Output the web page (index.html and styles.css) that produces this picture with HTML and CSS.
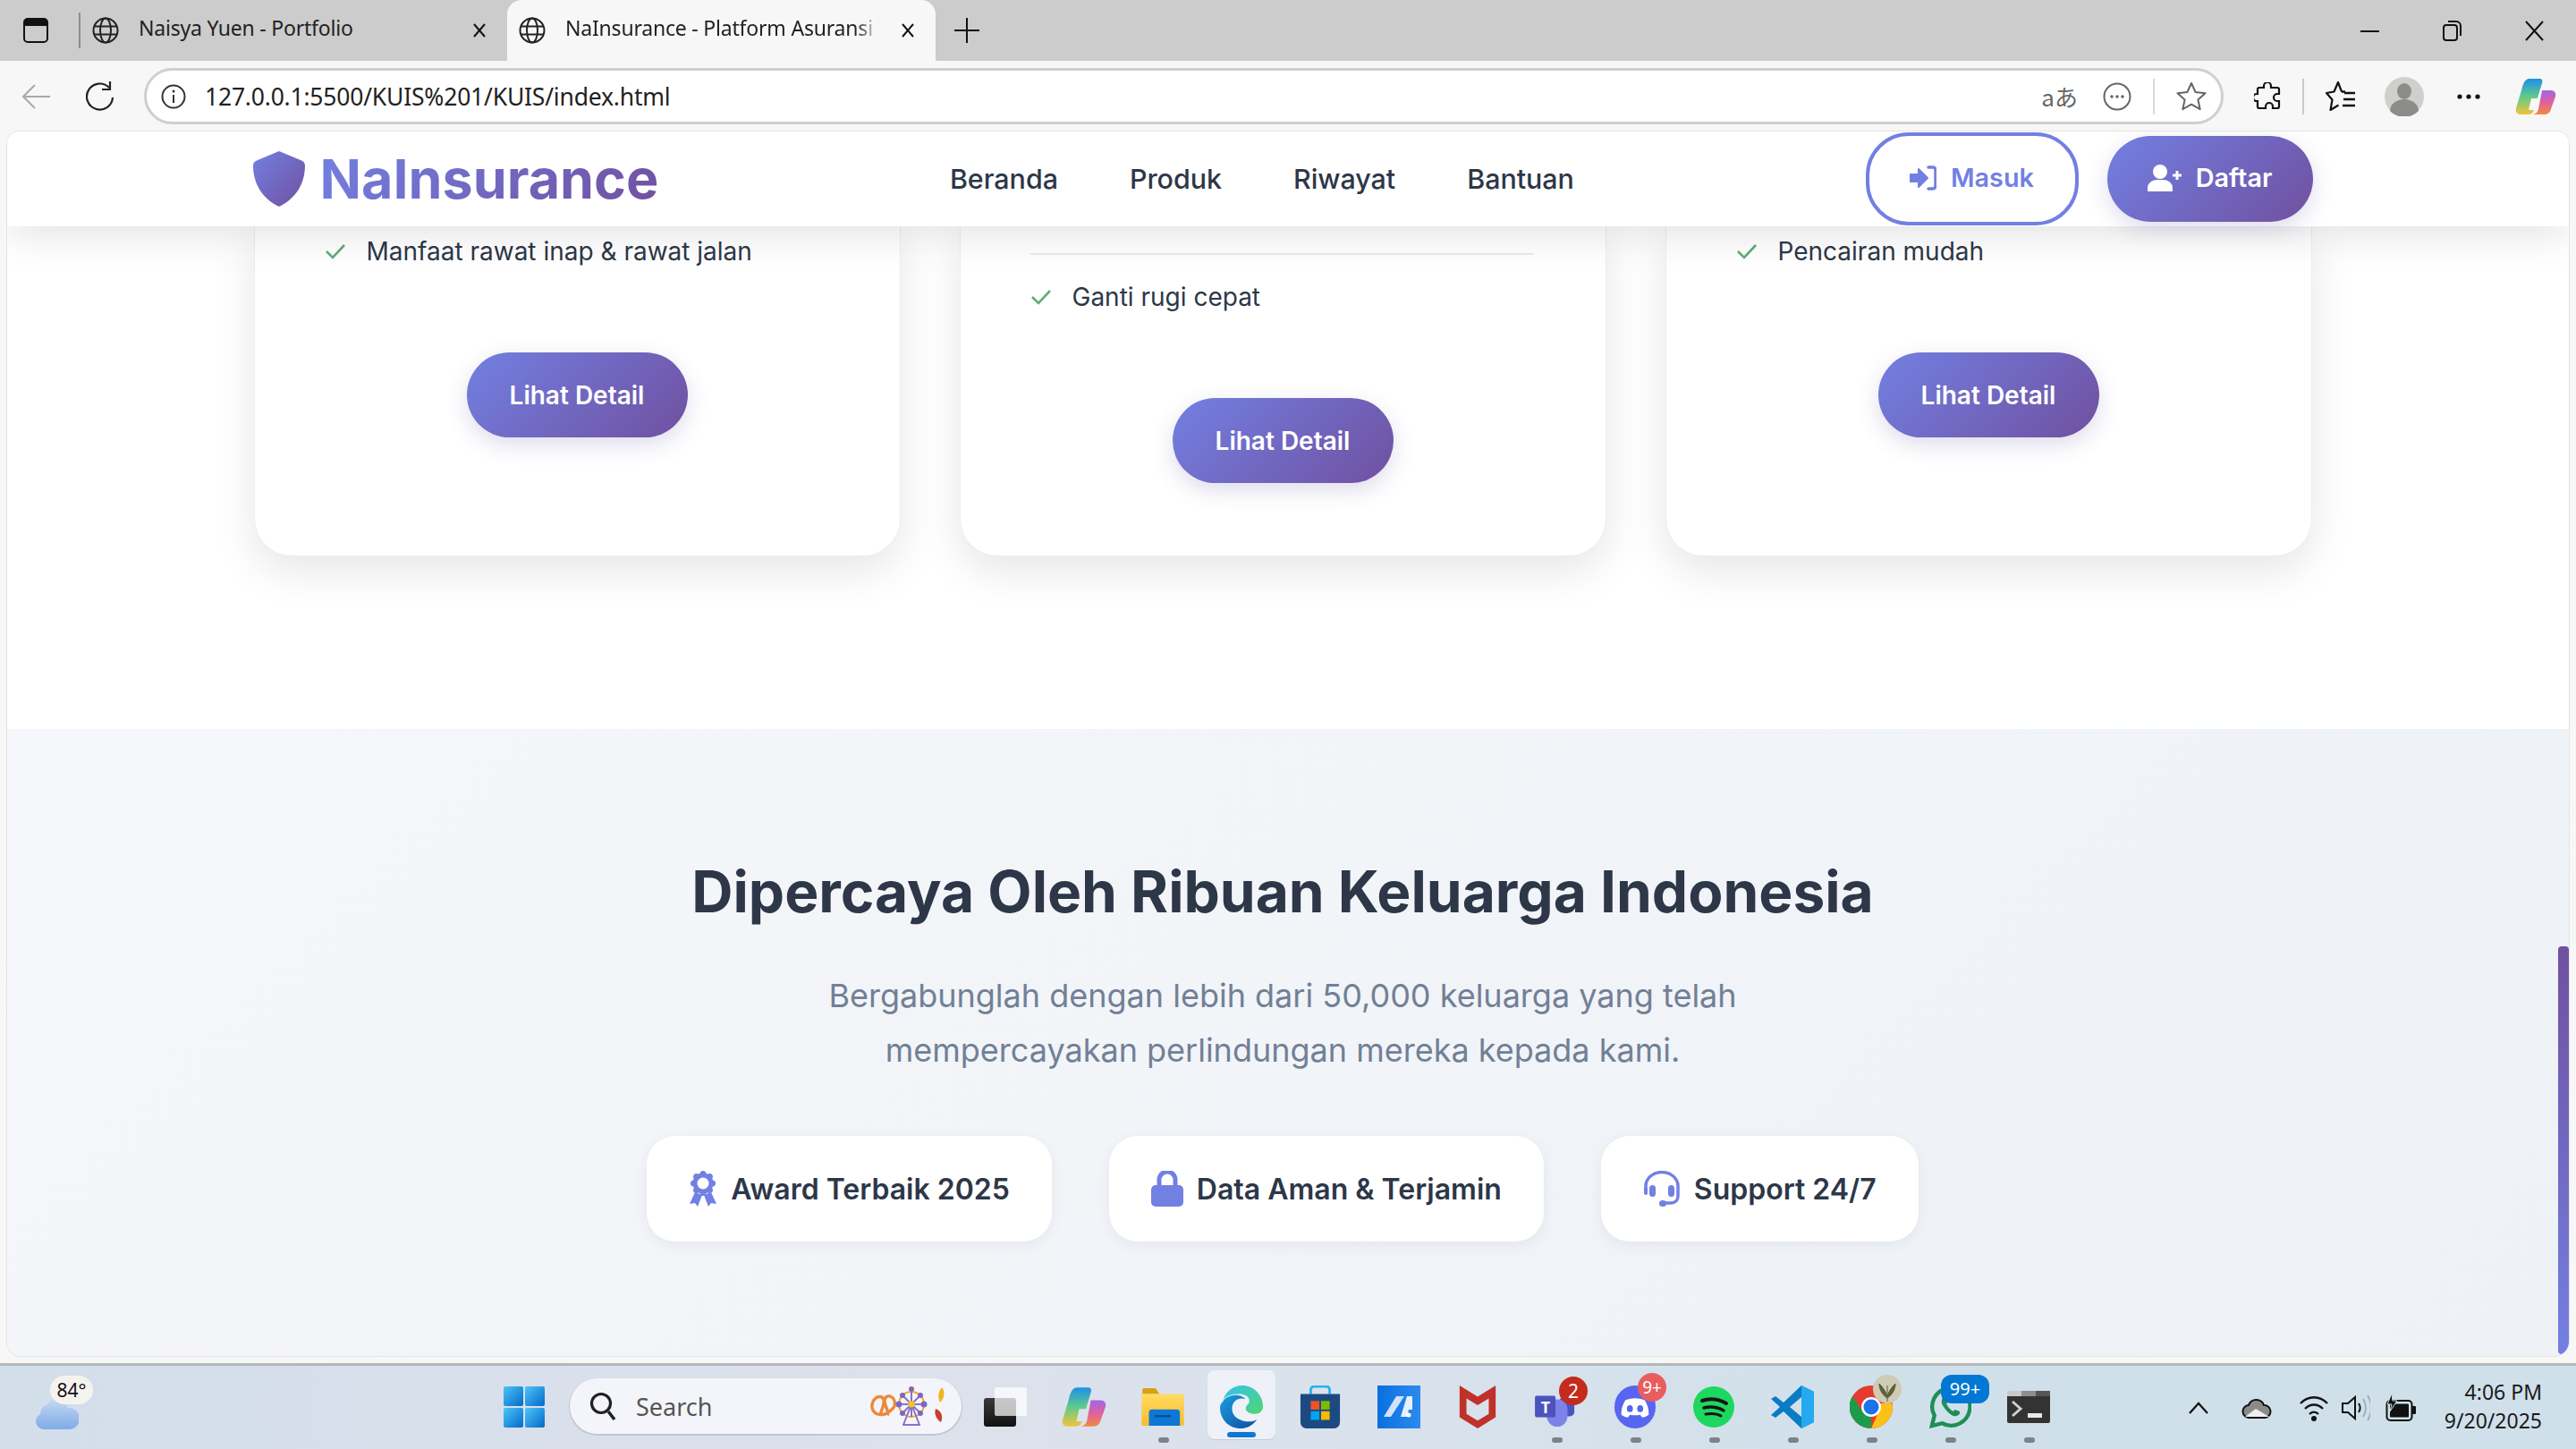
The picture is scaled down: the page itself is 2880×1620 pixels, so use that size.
FILE: index.html
```html
<!DOCTYPE html>
<html lang="id">
<head>
<meta charset="utf-8">
<title>NaInsurance - Platform Asuransi Terpercaya</title>
<link rel="stylesheet" href="styles.css">
</head>
<body>
<svg class="defs" aria-hidden="true">
  <defs>
    <linearGradient id="brand" x1="0" y1="0" x2="1" y2="1"><stop offset="0" stop-color="#7280e2"/><stop offset="1" stop-color="#7050a0"/></linearGradient>
    <linearGradient id="cp1" x1="0" y1="0" x2="0" y2="1"><stop offset="0" stop-color="#1f8fe8"/><stop offset=".5" stop-color="#5ecb8b"/><stop offset="1" stop-color="#f2c33a"/></linearGradient>
    <linearGradient id="cp2" x1="0" y1="0" x2="0" y2="1"><stop offset="0" stop-color="#a066e6"/><stop offset=".5" stop-color="#e0609f"/><stop offset="1" stop-color="#f28a3c"/></linearGradient>
    <linearGradient id="edge1" x1="0" y1="0" x2="1" y2="1"><stop offset="0" stop-color="#35c1f1"/><stop offset="1" stop-color="#4fd66f"/></linearGradient>
    <linearGradient id="edge2" x1="0" y1="0" x2="1" y2="1"><stop offset="0" stop-color="#1b9de2"/><stop offset="1" stop-color="#0c4f9e"/></linearGradient>
    <linearGradient id="win" x1="0" y1="0" x2="1" y2="1"><stop offset="0" stop-color="#4cc6f7"/><stop offset="1" stop-color="#0568c9"/></linearGradient>
    <linearGradient id="folder" x1="0" y1="0" x2="0" y2="1"><stop offset="0" stop-color="#ffdb62"/><stop offset="1" stop-color="#f9bd2c"/></linearGradient>
    <linearGradient id="cloud" x1="0" y1="0" x2="0" y2="1"><stop offset="0" stop-color="#c3d8f4"/><stop offset="1" stop-color="#7fabe6"/></linearGradient>
    <linearGradient id="dark" x1="0" y1="0" x2="0" y2="1"><stop offset="0" stop-color="#3a3a3a"/><stop offset="1" stop-color="#111"/></linearGradient>
    <linearGradient id="mblue" x1="0" y1="0" x2="1" y2="0"><stop offset="0" stop-color="#0a6fe0"/><stop offset="1" stop-color="#2c8bee"/></linearGradient>
  </defs>
</svg>

<header class="tabstrip">
  <svg class="tab-panel" width="28" height="28" viewBox="0 0 28 28"><rect x="1" y="1" width="26" height="26" rx="4" fill="none" stroke="#111" stroke-width="2"/><path d="M1 5a4 4 0 0 1 4-4h18a4 4 0 0 1 4 4v4H1z" fill="#111"/></svg>
  <span class="tab-divider"></span>
  <div class="tab tab-first">
    <svg class="globe" width="30" height="30" viewBox="0 0 30 30"><g fill="none" stroke="#222" stroke-width="2"><circle cx="15" cy="15" r="13.500"/><ellipse cx="15" cy="15" rx="6" ry="13.500"/><path d="M2 10.500h26M2 19.500h26"/></g></svg>
    <span class="tab-title">Naisya Yuen - Portfolio</span>
    <svg class="tab-close" width="18" height="18" viewBox="0 0 18 18"><path d="M3 2l12 14M15 2L3 16" stroke="#111" stroke-width="2"/></svg>
  </div>
  <div class="tab tab-active">
    <svg class="globe" width="30" height="30" viewBox="0 0 30 30"><g fill="none" stroke="#222" stroke-width="2"><circle cx="15" cy="15" r="13.500"/><ellipse cx="15" cy="15" rx="6" ry="13.500"/><path d="M2 10.500h26M2 19.500h26"/></g></svg>
    <span class="tab-title tab-title-fade">NaInsurance - Platform Asuransi Terpercaya</span>
    <svg class="tab-close" width="18" height="18" viewBox="0 0 18 18"><path d="M3 2l12 14M15 2L3 16" stroke="#111" stroke-width="2"/></svg>
  </div>
  <svg class="tab-new" width="30" height="30" viewBox="0 0 30 30"><path d="M15 1v28M1 15h28" stroke="#111" stroke-width="2"/></svg>
  <div class="winctl">
    <svg width="92" height="24" viewBox="0 0 22 24" class="wc"><path d="M0 13h21" stroke="#111" stroke-width="2"/></svg>
    <svg width="92" height="24" viewBox="0 0 22 24" class="wc"><rect x="1" y="6" width="15" height="17" rx="3" fill="none" stroke="#111" stroke-width="2"/><path d="M6 2h9a5 5 0 0 1 5 5v11" fill="none" stroke="#111" stroke-width="2"/></svg>
    <svg width="92" height="24" viewBox="0 0 22 24" class="wc"><path d="M1 2l19 21M20 2L1 23" stroke="#111" stroke-width="2"/></svg>
  </div>
</header>

<div class="toolbar">
  <svg class="tb-back" width="32" height="28" viewBox="0 0 32 28"><path d="M15 1L2 14l13 13M2 14h30" fill="none" stroke="#a8a8a8" stroke-width="2"/></svg>
  <svg class="tb-reload" width="32" height="34" viewBox="0 0 32 34"><path d="M26 7A14.500 14.500 0 1 0 30 18" fill="none" stroke="#222" stroke-width="2.200"/><path d="M27 0v9h-9" fill="none" stroke="#222" stroke-width="2.200"/></svg>
  <div class="omnibox">
    <svg width="28" height="28" viewBox="0 0 28 28"><circle cx="14" cy="14" r="12.500" fill="none" stroke="#333" stroke-width="2"/><path d="M14 12v9" stroke="#333" stroke-width="2"/><circle cx="14" cy="8" r="1.500" fill="#333"/></svg>
    <span class="url">127.0.0.1:5500/KUIS%201/KUIS/index.html</span>
    <div class="omni-right">
      <span class="translate">aあ</span>
      <svg width="32" height="32" viewBox="0 0 32 32"><circle cx="16" cy="16" r="14.500" fill="none" stroke="#666" stroke-width="2"/><g fill="#666"><circle cx="10" cy="16" r="1.800"/><circle cx="16" cy="16" r="1.800"/><circle cx="22" cy="16" r="1.800"/></g></svg>
      <span class="omni-sep"></span>
      <svg width="34" height="34" viewBox="0 0 34 34"><path d="M17 2l4.600 10 10.900 1.200-8.100 7.300 2.300 10.700L17 25.700 7.300 31.200l2.300-10.700-8.100-7.300L12.400 12z" fill="none" stroke="#666" stroke-width="2" stroke-linejoin="round"/></svg>
    </div>
  </div>
  <div class="tb-right">
    <svg width="30" height="32" viewBox="0 0 30 32"><path d="M11 4a4 4 0 0 1 8 0v2h7a2 2 0 0 1 2 2v5h-2a4 4 0 0 0 0 8h2v6a2 2 0 0 1-2 2h-5v-2a4 4 0 0 0-8 0v2H6a2 2 0 0 1-2-2v-6H3a3 3 0 0 1 0-8h1V8a2 2 0 0 1 2-2h5z" fill="none" stroke="#111" stroke-width="2.200"/></svg>
    <span class="tb-sep"></span>
    <svg width="34" height="34" viewBox="0 0 34 34"><path d="M18 11.500L14 1l-4.500 10.500L1 13l6.500 7.500L5.500 32l9-5.500" fill="none" stroke="#111" stroke-width="2.200" stroke-linejoin="round"/><path d="M18 11.500h4M21 13h12M20 20h13M19 27h14" fill="none" stroke="#111" stroke-width="2.400"/></svg>
    <svg class="avatar" width="44" height="44" viewBox="0 0 44 44"><circle cx="22" cy="22" r="22" fill="#d0cfcb"/><ellipse cx="22" cy="16" rx="8" ry="9" fill="#8c8c8a"/><path d="M6 38a16 13 0 0 1 32 0 22 22 0 0 1-32 0z" fill="#8c8c8a"/></svg>
    <svg class="tb-more" width="28" height="6" viewBox="0 0 28 6"><g fill="#111"><circle cx="4" cy="3" r="2.600"/><circle cx="14" cy="3" r="2.600"/><circle cx="24" cy="3" r="2.600"/></g></svg>
    <svg class="tb-copilot" width="46" height="42" viewBox="0 0 46 42"><path d="M16 1h11c3 0 4 2 3 5l-9 30c-1 3-3 5-7 5H6c-4 0-6-3-5-7l6-20C9 6 11 1 16 1z" fill="url(#cp1)"/><path d="M30 14h10c4 0 6 3 5 7l-5 14c-1 4-4 6-8 6H20c4-1 5-3 6-6z" fill="url(#cp2)"/><path d="M18 23h9l-4 13h-8z" fill="#f7f7f7"/></svg>
  </div>
</div>

<main class="page">
  <nav class="navbar">
    <div class="nav-inner">
      <a class="brand">
        <svg width="58" height="62" viewBox="0 0 58 62"><path d="M29 0l24 10c3 1 5 3 5 6 0 20-10 37-29 46C10 53 0 36 0 16c0-3 2-5 5-6z" fill="url(#brand)"/></svg>
        <span class="brand-text">NaInsurance</span>
      </a>
      <div class="nav-links">
        <a>Beranda</a><a>Produk</a><a>Riwayat</a><a>Bantuan</a>
      </div>
      <div class="nav-actions">
        <a class="btn-outline">
          <svg width="30" height="28" viewBox="0 0 30 28"><path d="M1 10h9V4l10 10-10 10v-6H1z" fill="#7280e2" stroke="#7280e2" stroke-width="2" stroke-linejoin="round"/><path d="M21 2h5a3 3 0 0 1 3 3v18a3 3 0 0 1-3 3h-5" fill="none" stroke="#7280e2" stroke-width="3.500" stroke-linecap="round"/></svg>
          Masuk
        </a>
        <a class="btn-solid">
          <svg width="38" height="30" viewBox="0 0 38 30"><circle cx="14" cy="8" r="8" fill="#fff"/><path d="M0 30v-4a10 9 0 0 1 10-9h8a10 9 0 0 1 10 9v4z" fill="#fff"/><path d="M33 7v10M28 12h10" stroke="#fff" stroke-width="3"/></svg>
          Daftar
        </a>
      </div>
    </div>
  </nav>

  <section class="products">
    <article class="card">
      <div class="check-item"><svg width="24" height="18" viewBox="0 0 24 18"><path d="M2 9l7 7L22 2" fill="none" stroke="#5fae75" stroke-width="2.600"/></svg><span>Manfaat rawat inap &amp; rawat jalan</span></div>
      <a class="btn-detail">Lihat Detail</a>
    </article>
    <article class="card">
      <div class="card-rule"></div>
      <div class="check-item"><svg width="24" height="18" viewBox="0 0 24 18"><path d="M2 9l7 7L22 2" fill="none" stroke="#5fae75" stroke-width="2.600"/></svg><span>Ganti rugi cepat</span></div>
      <a class="btn-detail">Lihat Detail</a>
    </article>
    <article class="card">
      <div class="check-item"><svg width="24" height="18" viewBox="0 0 24 18"><path d="M2 9l7 7L22 2" fill="none" stroke="#5fae75" stroke-width="2.600"/></svg><span>Pencairan mudah</span></div>
      <a class="btn-detail">Lihat Detail</a>
    </article>
  </section>

  <section class="trust">
    <h2>Dipercaya Oleh Ribuan Keluarga Indonesia</h2>
    <p>Bergabunglah dengan lebih dari 50,000 keluarga yang telah<br>mempercayakan perlindungan mereka kepada kami.</p>
    <div class="badges">
      <div class="badge">
        <svg width="32" height="40" viewBox="0 0 32 40"><g fill="#7280e2"><path d="M7 24L1 37l6-1 3 4 5-13zM25 24l6 13-6-1-3 4-5-13z"/><circle cx="16" cy="14" r="11.500"/><circle cx="16" cy="3.500" r="3.500"/><circle cx="23.400" cy="6.600" r="3.500"/><circle cx="26.500" cy="14" r="3.500"/><circle cx="23.400" cy="21.400" r="3.500"/><circle cx="16" cy="24.500" r="3.500"/><circle cx="8.600" cy="21.400" r="3.500"/><circle cx="5.500" cy="14" r="3.500"/><circle cx="8.600" cy="6.600" r="3.500"/></g><circle cx="16" cy="14" r="6.500" fill="#fff"/></svg>
        <span>Award Terbaik 2025</span>
      </div>
      <div class="badge">
        <svg width="36" height="40" viewBox="0 0 36 40"><path d="M9 18v-8a9 9 0 0 1 18 0v8" fill="none" stroke="#7280e2" stroke-width="5"/><rect y="16" width="36" height="24" rx="5" fill="#7280e2"/></svg>
        <span>Data Aman &amp; Terjamin</span>
      </div>
      <div class="badge">
        <svg width="42" height="40" viewBox="0 0 42 40"><path d="M3 20v-3a18 15.500 0 0 1 36 0v11c0 5-3 8-8 8h-7" fill="none" stroke="#7280e2" stroke-width="3.500"/><rect x="7" y="16" width="7" height="13" rx="3.500" fill="#7280e2"/><rect x="28" y="16" width="7" height="13" rx="3.500" fill="#7280e2"/><rect x="1" y="18" width="4" height="9" rx="2" fill="#7280e2"/><rect x="18" y="33" width="8" height="7" rx="3.500" fill="#7280e2"/></svg>
        <span>Support 24/7</span>
      </div>
    </div>
  </section>
  <div class="scroll-thumb"></div>
</main>

<footer class="taskbar">
  <div class="weather">
    <svg class="weather-icon" width="48" height="44" viewBox="0 0 48 44"><path d="M30 0h10l-3 14h-7z" fill="#f07a1c"/><path d="M9 44a9 9 0 0 1-4-17 11 11 0 0 1 8-11 13 13 0 0 1 23 4 12 12 0 0 1 2 24z" fill="url(#cloud)"/></svg>
    <span class="temp">84°</span>
  </div>
  <div class="task-center">
    <div class="ti"><svg width="46" height="46" viewBox="0 0 46 46"><g fill="url(#win)"><rect width="22" height="22" rx="2"/><rect x="24" width="22" height="22" rx="2"/><rect y="24" width="22" height="22" rx="2"/><rect x="24" y="24" width="22" height="22" rx="2"/></g></svg></div>
    <div class="search">
      <svg width="30" height="34" viewBox="0 0 30 34"><circle cx="13" cy="14" r="10.500" fill="none" stroke="#222" stroke-width="3.200"/><path d="M21 23l7 9" stroke="#222" stroke-width="3.600"/></svg>
      <span class="search-label">Search</span>
      <svg class="doodle" width="88" height="44" viewBox="0 0 88 44"><path d="M5 14c-5 6-4 14 3 17 6 2 12-1 17-6 4-4 3-12-3-14-6-1-7 5-5 10 2 6 4 9 2 11M5 14c4-4 9-3 10 1 1 5-2 11-4 16" fill="none" stroke="#ec8a3a" stroke-width="3.400"/><g stroke="#8a72c9" stroke-width="2" fill="none"><circle cx="46" cy="20" r="14" stroke="#f0a826"/><path d="M46 6v28M32 20h28M36 10l20 20M56 10L36 30M46 20l-9 23M46 20l9 23M36 43h20"/></g><g fill="#7d66c2"><circle cx="46" cy="3" r="3"/><circle cx="60" cy="20" r="3.500"/><circle cx="32" cy="20" r="3.500"/><circle cx="36" cy="10" r="3"/><circle cx="56" cy="10" r="3"/><circle cx="36" cy="30" r="3"/><circle cx="56" cy="30" r="3"/></g><circle cx="46" cy="20" r="3.500" fill="#f5c518"/><path d="M80 1c4 5 3 12-2 17-3-6-2-12 2-17z" fill="#f0b323"/><path d="M73 25c6 2 9 8 6 15-5-3-8-9-6-15z" fill="#c9402a"/></svg>
    </div>
    <div class="ti"><svg width="48" height="44" viewBox="0 0 48 44"><rect x="0" y="12" width="36" height="32" rx="3" fill="url(#dark)"/><rect x="12" y="0" width="36" height="32" rx="2" fill="#fff" fill-opacity=".72"/></svg></div>
    <div class="ti"><svg width="50" height="46" viewBox="0 0 46 42"><path d="M16 1h11c3 0 4 2 3 5l-9 30c-1 3-3 5-7 5H6c-4 0-6-3-5-7l6-20C9 6 11 1 16 1z" fill="url(#cp1)"/><path d="M30 14h10c4 0 6 3 5 7l-5 14c-1 4-4 6-8 6H20c4-1 5-3 6-6z" fill="url(#cp2)"/><path d="M18 23h9l-4 13h-8z" fill="#dde2ec"/></svg></div>
    <div class="ti ti-dot"><svg width="50" height="42" viewBox="0 0 52 46"><path d="M1 2a2 2 0 0 1 2-2h14l5 7h-21z" fill="#d9a015"/><path d="M0 7h50a2 2 0 0 1 2 2v35a2 2 0 0 1-2 2H2a2 2 0 0 1-2-2z" fill="url(#folder)"/><path d="M9 46V30a4 4 0 0 1 4-4h30a4 4 0 0 1 4 4v16z" fill="#0f78d4"/><rect x="16" y="33" width="20" height="2.500" fill="#084f96"/></svg></div>
    <div class="ti ti-active"><svg width="48" height="48" viewBox="0 0 50 50"><path d="M3 19C6 7 15 0 26 0c13 0 24 11 24 24 0 5-3 9-9 9-7 0-11-3-11-6 0-5 4-4 4-9C34 12 28 10 22 10 12 10 5 13 3 19z" fill="url(#edge1)"/><path d="M3 19c5-8 19-11 27-3-8-3-16 2-16 11 0 10 10 15 20 15 4 0 7-1 9-3-4 7-11 11-19 11C10 50 0 39 0 26c0-3 1-5 3-7z" fill="url(#edge2)"/></svg></div>
    <div class="ti"><svg width="46" height="48" viewBox="0 0 46 50"><path d="M12 10V5a4 4 0 0 1 4-4h14a4 4 0 0 1 4 4v5" fill="none" stroke="#27b4ee" stroke-width="3"/><path d="M0 10h46v33a7 7 0 0 1-7 7H7a7 7 0 0 1-7-7z" fill="#1c4a80"/><rect x="12" y="18" width="10" height="10" fill="#f25022"/><rect x="24" y="18" width="10" height="10" fill="#7fba00"/><rect x="12" y="30" width="10" height="10" fill="#00a4ef"/><rect x="24" y="30" width="10" height="10" fill="#ffb900"/></svg></div>
    <div class="ti"><svg width="48" height="48" viewBox="0 0 48 48"><rect width="48" height="48" fill="url(#mblue)"/><path d="M21 12h9L15 35H7z" fill="#cfe2fa"/><path d="M33 12h6v15L35 27l-2 8h-7z" fill="#e6f0fc"/><circle cx="35" cy="33" r="2.500" fill="#fff"/></svg></div>
    <div class="ti"><svg width="42" height="48" viewBox="0 0 42 50"><path d="M0 0l21 13L42 0v37L21 50 0 37zM8 15v18l13 8 13-8V15l-13 8z" fill="#c0312a" fill-rule="evenodd"/></svg></div>
    <div class="ti ti-dot">
      <svg width="48" height="44" viewBox="0 0 50 46"><circle cx="36" cy="8" r="7" fill="#5a62c4"/><rect x="28" y="12" width="18" height="22" rx="5" fill="#4d55bd"/><rect x="14" y="14" width="24" height="32" rx="12" fill="#7b83eb"/><rect x="0" y="10" width="24" height="25" rx="2" fill="#4b53bc"/></svg>
      <span class="teams-t">T</span>
      <span class="count count-red">2</span>
    </div>
    <div class="ti ti-dot">
      <svg width="48" height="48" viewBox="0 0 48 50"><ellipse cx="24" cy="25" rx="24" ry="25" fill="#5865f2"/><path d="M13 17c7-3 15-3 22 0 4 6 5 11 5 17-3 2-5 3-8 3l-2-3c-4 1-8 1-12 0l-2 3c-3 0-5-1-8-3 0-6 1-11 5-17z" fill="#fff"/><ellipse cx="18" cy="27" rx="3.500" ry="4" fill="#5865f2"/><ellipse cx="30" cy="27" rx="3.500" ry="4" fill="#5865f2"/></svg>
      <span class="count count-coral">9+</span>
    </div>
    <div class="ti ti-dot"><svg width="46" height="46" viewBox="0 0 46 46"><circle cx="23" cy="23" r="23" fill="#1ed760"/><g fill="none" stroke="#191414" stroke-linecap="round"><path d="M10 16c9-3 18-2 27 3" stroke-width="4"/><path d="M12 24c8-2 15-1 22 3" stroke-width="3.500"/><path d="M14 31c6-1 12-1 17 2" stroke-width="3"/></g></svg></div>
    <div class="ti ti-dot"><svg width="48" height="48" viewBox="0 0 48 48"><path d="M34 0l14 7v34l-14 7-20-19-9 7-5-3 10-9L0 15l5-3 9 7zM34 13L21 24l13 11z" fill="#0a7cc4" fill-rule="evenodd"/><path d="M34 0l14 7v34l-14 7z" fill="#25a9ef"/></svg></div>
    <div class="ti ti-dot">
      <svg width="48" height="48" viewBox="0 0 48 48"><circle cx="24" cy="24" r="24" fill="#e33b2e"/><path d="M24 24L3 36a24 24 0 0 0 21 12l0 0z" fill="#1a9c4a"/><path d="M3 12A24 24 0 0 0 3 36l12-6z" fill="#1a9c4a"/><path d="M48 24a24 24 0 0 1-24 24l9-20-3-8h17z" fill="#fbc116"/><circle cx="24" cy="24" r="11" fill="#fff"/><circle cx="24" cy="24" r="8.500" fill="#1a73e8"/></svg>
      <svg class="corner-avatar" width="32" height="32" viewBox="0 0 32 32"><circle cx="16" cy="16" r="16" fill="#cfcbb4"/><path d="M16 30V12M16 26C10 22 7 16 7 10c4 4 7 8 9 14 2-6 5-10 9-14 0 6-3 12-9 16z" fill="#5c5f37" stroke="#5c5f37"/></svg>
    </div>
    <div class="ti ti-dot">
      <svg width="48" height="48" viewBox="0 0 50 50"><path d="M4 47l3-12A22 22 0 1 1 16 44z" fill="none" stroke="#1d8f55" stroke-width="4.500"/><path d="M17 14c-3 3-2 8 3 14s10 9 14 7c3-1 3-4 2-5l-5-2-2 2c-3-1-7-6-8-9l2-2-2-5z" fill="#1d8f55"/></svg>
      <span class="count count-blue">99+</span>
    </div>
    <div class="ti ti-dot"><svg width="48" height="36" viewBox="0 0 48 36"><rect width="48" height="36" rx="2" fill="#333"/><rect width="16" height="6" fill="#c9c9c9"/><rect x="16" width="16" height="6" fill="#8e8e8e"/><rect x="32" width="16" height="6" fill="#555"/><path d="M6 12l9 8-9 8" fill="none" stroke="#cfcfcf" stroke-width="3"/><rect x="23" y="25" width="16" height="5" fill="#e8e8e8"/></svg></div>
  </div>
  <div class="tray">
    <svg class="tray-chevron" width="24" height="14" viewBox="0 0 24 14"><path d="M2 13L12 2l10 11" fill="none" stroke="#111" stroke-width="2.200"/></svg>
    <svg class="tray-cloud" width="34" height="24" viewBox="0 0 34 24"><path d="M9 23a7 7 0 0 1-1-14 9 9 0 0 1 17 0 7 7 0 0 1 1 14z" fill="#8a8a8a" stroke="#111" stroke-width="2"/><path d="M4 22l12-9 15 9z" fill="#eee"/></svg>
    <svg class="tray-wifi" width="34" height="32" viewBox="0 0 34 32"><g fill="none" stroke="#111" stroke-width="2.400"><path d="M2 11c9-9 21-9 30 0"/><path d="M7 17c6-6 14-6 20 0"/><path d="M12 23c3-3 7-3 10 0"/></g><circle cx="17" cy="28" r="3" fill="#111"/></svg>
    <svg class="tray-sound" width="32" height="32" viewBox="0 0 32 32"><path d="M1 11h6l8-7v24l-8-7H1z" fill="none" stroke="#111" stroke-width="2"/><path d="M19 11c2 3 2 7 0 10" fill="none" stroke="#111" stroke-width="2"/><path d="M24 6c4 6 4 14 0 20M29 2c5 8 5 20 0 28" fill="none" stroke="#a0aab2" stroke-width="1.800"/></svg>
    <svg class="tray-battery" width="34" height="32" viewBox="0 0 34 32"><rect x="1.500" y="8" width="28" height="22" rx="4" fill="none" stroke="#111" stroke-width="2"/><rect x="5" y="11.500" width="21" height="15" rx="1" fill="#111"/><rect x="30" y="14" width="4" height="9" rx="1" fill="#111"/><path d="M7 0L2 12h5l-2 8 8-12H8z" fill="#111" stroke="#cfe0ea"/></svg>
    <div class="clock"><span>4:06 PM</span><span>9/20/2025</span></div>
  </div>
</footer>
</body>
</html>
```

FILE: styles.css
```css
* { box-sizing: border-box; }
html, body { margin: 0; padding: 0; }
body {
  width: 2880px; height: 1620px; overflow: hidden;
  display: flex; flex-direction: column;
  background: #f7f7f7;
  font-family: "Noto Sans", "Liberation Sans", sans-serif;
}
.defs { position: absolute; width: 0; height: 0; }
a { text-decoration: none; }

/* tab strip */
.tabstrip { height: 68px; flex: none; background: #cccccc; display: flex; align-items: center; padding-left: 26px; position: relative; }
.tab-panel { flex: none; }
.tab-divider { width: 2px; height: 40px; background: #8d8d8d; margin-left: 34px; flex: none; }
.tab { width: 479px; height: 68px; flex: none; display: flex; align-items: center; padding: 0 22px 0 13px; gap: 22px; position: relative; }
.tab-first { width: 477px; }
.tab-title { font-size: 23px; line-height: 30px; margin-top: -6px; color: #222; white-space: nowrap; overflow: hidden; flex: 1; min-width: 0; letter-spacing: -.2px; }
.tab-title-fade { -webkit-mask-image: linear-gradient(90deg, #000 92%, transparent 100%); mask-image: linear-gradient(90deg, #000 92%, transparent 100%); }
.tab-active { background: #f7f7f7; border-radius: 16px 16px 0 0; padding-left: 13px; }
.tab-new { margin-left: 20px; flex: none; }
.winctl { margin-left: auto; display: flex; padding-right: 0; }
.wc { display: block; }

/* toolbar */
.toolbar { height: 79px; flex: none; display: flex; align-items: center; padding: 0 0 0 24px; background: #f7f7f7; }
.tb-back { flex: none; }
.tb-reload { flex: none; margin-left: 40px; }
.omnibox { margin-left: 33px; width: 2325px; height: 63px; flex: none; border: 3px solid #cfcfcf; border-radius: 32px; background: #fff; display: flex; align-items: center; padding: 0 16px; gap: 21px; }
.url { font-size: 26.500px; color: #222; letter-spacing: -.2px; white-space: nowrap; }
.omni-right { margin-left: auto; display: flex; align-items: center; gap: 24px; }
.translate { font-size: 26px; color: #666; font-family: "Noto Sans CJK JP", "Noto Sans", sans-serif; margin-right: 4px; }
.omni-sep { width: 2px; height: 40px; background: #d8d8d8; }
.tb-right { display: flex; align-items: center; margin-left: 34px; flex: none; }
.tb-sep { width: 2px; height: 40px; background: #c8c8c8; margin: 0 24px 0 24px; }
.avatar { margin-left: 32px; }
.tb-more { margin-left: 36px; }
.tb-copilot { margin-left: 38px; }

/* page */
.page { flex: none; height: 1369px; margin: 0 8px; background: #fff; position: relative; overflow: hidden; border-radius: 14px 14px 16px 16px; box-shadow: 0 0 0 1px #e4e4e4; font-family: Inter, "Liberation Sans", sans-serif; }
.navbar { height: 106px; padding-right: 12px; background: #fff; position: relative; z-index: 2; box-shadow: 0 6px 50px rgba(0,0,0,.13); }
.nav-inner { width: 2303px; height: 100%; margin: 0 auto; display: flex; align-items: center; justify-content: space-between; }
.brand { display: flex; align-items: center; gap: 17px; }
.brand-text { font-size: 61px; font-weight: 700; line-height: 1; background: linear-gradient(135deg, #7280e2, #7050a0); -webkit-background-clip: text; background-clip: text; color: transparent; }
.nav-links { display: flex; gap: 80px; }
.nav-links a { font-size: 30.400px; font-weight: 500; color: #2d3748; }
.nav-actions { display: flex; align-items: center; gap: 32px; }
.btn-outline, .btn-solid { display: flex; align-items: center; justify-content: center; gap: 16px; padding-bottom: 3px; font-size: 28.800px; font-weight: 600; border-radius: 48px; }
.btn-outline { width: 238px; height: 104px; border: 4px solid #7280e2; color: #7280e2; background: #fff; }
.btn-solid { width: 230px; height: 96px; color: #fff; background: linear-gradient(135deg, #7280e2, #7050a0); box-shadow: 0 8px 24px rgba(90,80,160,.2); }

.products { height: 562px; padding-bottom: 193px; padding-right: 12px; display: flex; justify-content: center; gap: 66px; background: #fff; }
.card { width: 723px; padding: 4px 80px 0 78px; background: #fff; border: 1px solid #eceef5; border-top: 0; border-radius: 0 0 42px 42px; box-shadow: 0 16px 48px rgba(0,0,0,.1); display: flex; flex-direction: column; align-items: stretch; }
.card-rule { height: 2px; margin-top: 26px; margin-bottom: 23px; background: #e6e9ef; flex: none; }
.check-item { height: 48px; flex: none; display: flex; align-items: center; gap: 23px; font-size: 28px; color: #2d3748; }
.check-item svg { flex: none; }
.btn-detail { margin-top: 89px; margin-left: 2px; align-self: center; width: 247px; height: 95px; display: flex; align-items: center; justify-content: center; font-size: 28px; font-weight: 600; color: #fff; border-radius: 48px; background: linear-gradient(135deg, #7280e2, #7050a0); box-shadow: 0 8px 24px rgba(90,80,160,.2); }

.trust { height: 701px; padding: 144px 12px 0 0; background: linear-gradient(135deg, #f5f7fa, #eef1f6); text-align: center; }
.trust h2 { margin: 0; font-size: 64px; line-height: 76px; font-weight: 700; color: #2d3748; }
.trust p { margin: 48px 0 0; font-size: 36px; line-height: 61px; color: #718096; }
.badges { display: flex; justify-content: center; gap: 64px; margin-top: 65px; }
.badge { height: 118px; padding: 0 47px; display: flex; align-items: center; gap: 15px; font-size: 32px; font-weight: 600; color: #2d3748; background: #fff; border-radius: 32px; box-shadow: 0 4px 16px rgba(0,0,0,.06); }

.scroll-thumb { position: absolute; right: 0; top: 911px; width: 12px; height: 456px; border-radius: 6px 6px 12px 6px; background: linear-gradient(180deg, #7050a0, #7280e2); z-index: 3; }

/* taskbar */
.taskbar { margin-top: auto; height: 96px; flex: none; border-top: 3px solid #b4b8bc; display: grid; grid-template-columns: 542px auto 1fr; background: linear-gradient(90deg, #d2deea 0%, #dde1ec 35%, #d9e2ec 55%, #cfe0ea 75%, #cfe0ea 100%); }
.weather { position: relative; }
.weather-icon { position: absolute; left: 40px; top: 27px; }
.temp { position: absolute; left: 56px; top: 11px; width: 48px; height: 32px; border-radius: 16px; background: #f6f3ee; font-size: 21px; line-height: 32px; text-align: center; color: #111; }
.task-center { display: flex; align-items: stretch; }
.ti { width: 88px; position: relative; display: flex; align-items: center; justify-content: center; padding-bottom: 2px; }
.ti-dot::after { content: ""; position: absolute; bottom: 7px; left: 39px; width: 12px; height: 6px; border-radius: 3px; background: #7d8288; }
.ti-active::before { content: ""; position: absolute; left: 6px; right: 6px; top: 5px; bottom: 11px; background: #eef1f8; border-radius: 8px; box-shadow: 0 1px 1px rgba(0,0,0,.1); }
.ti-active::after { content: ""; position: absolute; bottom: 13px; left: 28px; width: 32px; height: 6px; border-radius: 3px; background: #0f78d4; }
.ti-active svg { position: relative; }
.search { width: 438px; height: 62px; margin: 14px 5px 0 7px; display: flex; align-items: center; padding: 0 14px 0 22px; gap: 22px; background: #f4f5fa; border-radius: 31px; box-shadow: 0 1px 0 1px #c2c6d0; }
.search-label { font-size: 27px; color: #555; }
.doodle { margin-left: auto; }
.teams-t { position: absolute; left: 20px; top: 34px; width: 24px; text-align: center; color: #fff; font-size: 18px; font-weight: 700; }
.count { position: absolute; color: #fff; text-align: center; font-size: 21px; }
.count-red { left: 47px; top: 12px; width: 32px; height: 32px; border-radius: 50%; line-height: 32px; background: #c42b1c; }
.count-coral { left: 47px; top: 8px; width: 32px; height: 32px; border-radius: 50%; line-height: 32px; background: #e85d5d; font-size: 19px; }
.count-blue { left: 34px; top: 10px; width: 54px; height: 32px; border-radius: 12px; line-height: 32px; background: #0078d4; font-size: 20px; }
.corner-avatar { position: absolute; left: 46px; top: 10px; }
.tray { display: flex; align-items: center; justify-content: flex-end; padding: 0 38px 0 0; }
.tray-cloud { margin-left: 36px; margin-right: 30px; }
.tray-sound { margin-left: 14px; }
.tray-battery { margin-left: 17px; }
.clock { display: flex; flex-direction: column; align-items: flex-end; font-size: 23px; line-height: 32px; color: #1a1a1a; margin-left: 32px; padding-bottom: 4px; }
```
